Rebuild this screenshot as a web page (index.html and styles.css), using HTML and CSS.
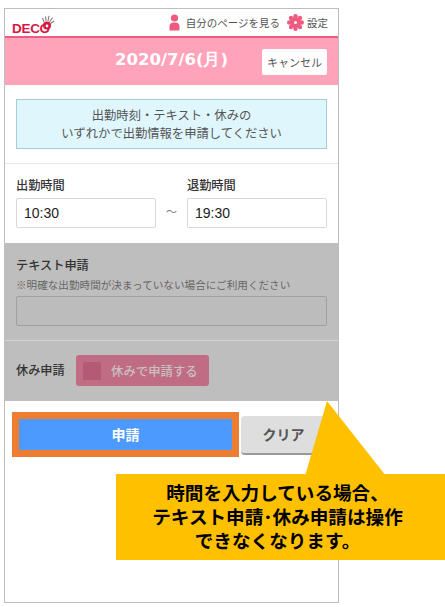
FILE: index.html
```html
<!DOCTYPE html>
<html lang="ja">
<head>
<meta charset="utf-8">
<title>DECO</title>
<link rel="stylesheet" href="styles.css">
</head>
<body>
<div class="phone">
  <header class="top">
    <div class="logo">
      <span class="logo-text">DECO</span>
      <svg class="crown" width="14" height="15" viewBox="0 0 14 15"><circle cx="6" cy="10.500" r="4" fill="#d9173f"/><circle cx="6" cy="11" r="1.400" fill="#fff"/><path d="M3 7 1.500 3M5 6 4.500 1.500M7 6 8 .8M8.500 7 11.500 2.500M9.500 8.500 13 6" stroke="#8a7a7a" stroke-width="1.100" fill="none"/></svg>
    </div>
    <nav class="links">
      <svg class="icon" width="11" height="17" viewBox="0 0 11 17"><circle cx="5.500" cy="4" r="3.600" fill="#ee5a80"/><path d="M.5 16.500v-4.500a4 4 0 0 1 4-3.500h2a4 4 0 0 1 4 3.500v4.500z" fill="#ee5a80"/></svg>
      <span class="link">自分のページを見る</span>
      <svg class="icon gear" width="17" height="17" viewBox="0 0 17 17"><circle cx="8.500" cy="8.500" r="3.500" fill="none" stroke="#ee5a80" stroke-width="4"/><g fill="#ee5a80"><circle cx="8.500" cy="2.200" r="2.200"/><circle cx="8.500" cy="14.800" r="2.200"/><circle cx="2.200" cy="8.500" r="2.200"/><circle cx="14.800" cy="8.500" r="2.200"/><circle cx="4" cy="4" r="2.200"/><circle cx="13" cy="4" r="2.200"/><circle cx="4" cy="13" r="2.200"/><circle cx="13" cy="13" r="2.200"/></g></svg>
      <span class="link">設定</span>
    </nav>
  </header>
  <div class="band">
    <h1 class="date">2020/7/6(月)</h1>
    <button class="cancel">キャンセル</button>
  </div>
  <section class="notice-wrap">
    <p class="notice">出勤時刻・テキスト・休みの<br>いずれかで出勤情報を申請してください</p>
  </section>
  <section class="times">
    <div class="time-col">
      <label class="label">出勤時間</label>
      <div class="input">10:30</div>
    </div>
    <span class="tilde">～</span>
    <div class="time-col">
      <label class="label">退勤時間</label>
      <div class="input">19:30</div>
    </div>
  </section>
  <section class="text-req">
    <div class="label">テキスト申請</div>
    <div class="hint">※明確な出勤時間が決まっていない場合にご利用ください</div>
    <div class="text-input"></div>
  </section>
  <section class="rest">
    <span class="label rest-label">休み申請</span>
    <div class="rest-btn"><span class="check"></span><span>休みで申請する</span></div>
  </section>
  <div class="actions">
    <button class="submit">申請</button>
    <button class="clear">クリア</button>
  </div>
</div>
<svg class="pointer" width="82" height="75" viewBox="0 0 82 75"><path d="M0 75 22 0 81 75z" fill="#ffc000"/></svg>
<div class="callout">時間を入力している場合、<br>テキスト申請･休み申請は操作<br>できなくなります。</div>
</body>
</html>
```
FILE: styles.css
```css
* { box-sizing: border-box; }
html, body { margin: 0; padding: 0; }
body {
  position: relative;
  width: 445px;
  height: 607px;
  overflow: hidden;
  background: #fff;
  padding: 8px 0 0 4px;
  font-family: "Noto Sans CJK JP", "Liberation Sans", sans-serif;
  color: #333;
}
.phone {
  width: 335px;
  height: 595px;
  border: 1px solid #bdbdbd;
  display: flex;
  flex-direction: column;
  background: #fff;
}
.top {
  height: 27px;
  display: flex;
  align-items: center;
  justify-content: space-between;
  padding: 0 10px 0 7px;
  flex: none;
}
.logo { position: relative; height: 20px; width: 40px; }
.logo-text {
  position: absolute;
  left: 0;
  top: 8px;
  font: bold 13.500px/16px "Liberation Sans", sans-serif;
  color: #d9173f;
  letter-spacing: -0.3px;
}
.crown { position: absolute; left: 29px; top: 2px; }
.links { display: flex; align-items: center; }
.link { font-size: 10.500px; line-height: 17px; color: #555; }
.icon { margin-right: 6px; }
.gear { margin-left: 7px; margin-right: 3px; }
.band {
  height: 49px;
  flex: none;
  background: #ffa3ba;
  border-top: 2px solid #ee5a80;
  display: flex;
  align-items: center;
  justify-content: flex-end;
  position: relative;
  padding-right: 11px;
}
.date {
  position: absolute;
  left: 110px;
  top: 10px;
  margin: 0;
  font: bold 16.500px/24px "DejaVu Sans", sans-serif;
  color: #fff;
}
.cancel {
  width: 65px;
  height: 26px;
  border: 0;
  padding: 0;
  border-radius: 2px;
  background: #fff;
  font: 11px/26px "Noto Sans CJK JP", sans-serif;
  color: #555;
}
.notice-wrap {
  height: 79px;
  flex: none;
  padding: 14px 11px 0;
  border-bottom: 1px solid #e8e8e8;
}
.notice {
  margin: 0;
  height: 50px;
  padding-top: 6px;
  background: #e0f6fd;
  border: 1px solid #a6cfd9;
  text-align: center;
  font-size: 12.300px;
  line-height: 18px;
  color: #555;
}
.times {
  height: 79px;
  flex: none;
  display: flex;
  align-items: flex-start;
  padding: 12px 11px 0;
}
.time-col { width: 140px; display: flex; flex-direction: column; }
.label { font-size: 12.200px; line-height: 18px; color: #333; font-weight: 500; display: block; }
.input {
  margin-top: 4px;
  height: 30px;
  border: 1px solid #d8d8d8;
  border-radius: 2px;
  padding-left: 7px;
  font: 14px/28px "Liberation Sans", sans-serif;
  color: #222;
}
.tilde { width: 31px; text-align: center; margin-top: 26px; font-size: 11px; line-height: 18px; color: #777; }
.text-req {
  height: 98px;
  flex: none;
  background: #bebebe;
  padding: 13px 11px 0;
  border-bottom: 1px solid #d4d4d4;
}
.text-req .label { line-height: 18px; }
.hint { font-size: 10.600px; line-height: 14px; color: #666; margin-top: 4px; }
.text-input {
  margin-top: 4px;
  height: 30px;
  border: 1px solid #a0a0a0;
  border-radius: 2px;
  background: #bcbcbc;
}
.rest {
  height: 60px;
  flex: none;
  background: #bebebe;
  display: flex;
  align-items: flex-start;
  padding: 14px 11px 0;
}
.rest-label { line-height: 31px; width: 60px; flex: none; }
.rest-btn {
  width: 133px;
  height: 31px;
  background: #bf6c84;
  border-radius: 3px;
  display: flex;
  align-items: center;
  padding-left: 7px;
  font-size: 12.400px;
  font-weight: 500;
  color: #c9c0c2;
}
.check { width: 18px; height: 18px; border-radius: 2px; background: #b55a76; margin-right: 10px; }
.actions {
  display: flex;
  align-items: flex-start;
  padding: 11px 0 0 7px;
}
.submit {
  width: 227px;
  height: 45px;
  border: 7px solid #ed7d31;
  padding: 0;
  background: #4d9aff;
  color: #fff;
  font: bold 14px/31px "Noto Sans CJK JP", sans-serif;
  flex: none;
}
.clear {
  margin: 4px 0 0 2px;
  width: 85px;
  height: 39px;
  padding: 0;
  border: 0;
  border-bottom: 2px solid #999;
  border-radius: 4px;
  background: #dedede;
  color: #555;
  font: bold 14px/37px "Noto Sans CJK JP", sans-serif;
}
.pointer { position: absolute; left: 305px; top: 401px; }
.callout {
  position: absolute;
  left: 116px;
  top: 474px;
  width: 329px;
  height: 86px;
  background: #ffc000;
  color: #000;
  text-align: center;
  font-size: 18.600px;
  font-weight: 700;
  line-height: 24px;
  padding-top: 6px;
  padding-right: 6px;
}
```
